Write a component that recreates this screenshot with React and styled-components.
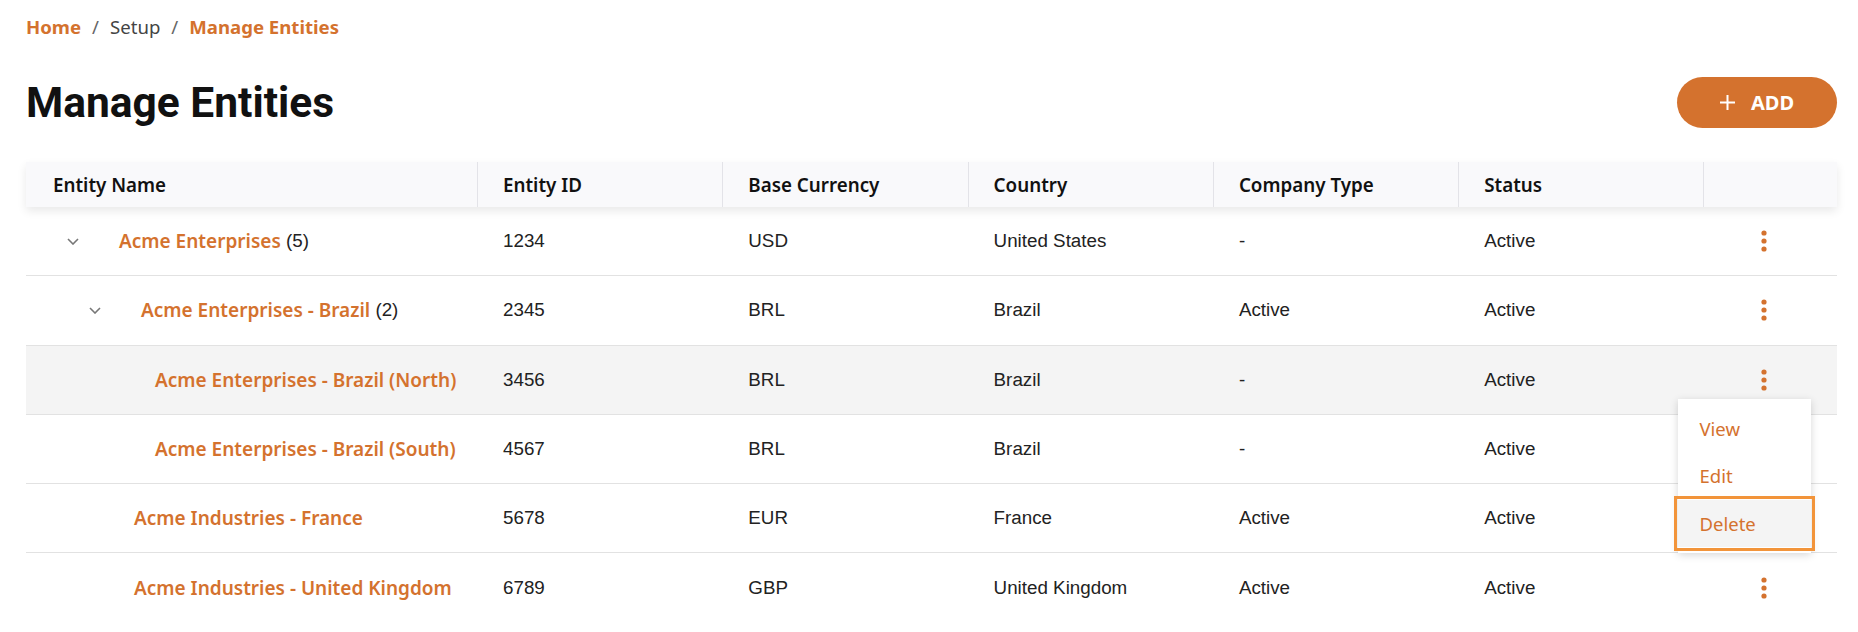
import React from 'react';
import styled, { createGlobalStyle } from 'styled-components';

const ORANGE = '#d4722e';
const COLS = '451px repeat(5, 245.3px) 1fr';

const GlobalStyle = createGlobalStyle`
    body {
        margin: 0;
        background: #fff;
        font-family: "Noto Sans", "Liberation Sans", sans-serif;
    }
`

const Page = styled.div`
    padding: 15px 21px 0 26px;
`

const Crumbs = styled.nav`
    display: flex;
    align-items: center;
    height: 24px;
    font-size: 18.6px;
    line-height: 24px;
`

const Crumb = styled.span`
    color: ${p => p.$active ? ORANGE : '#444'};
    font-weight: ${p => p.$active ? 700 : 400};
`

const Slash = styled.span`
    color: #666;
    margin: 0 11px;
`

const TitleBar = styled.div`
    display: flex;
    align-items: center;
    justify-content: space-between;
    margin-top: 38px;
    height: 51px;
`

const Title = styled.h1`
    margin: 0;
    font-family: Roboto, "Liberation Sans", sans-serif;
    font-weight: 700;
    font-size: 42.5px;
    line-height: 51px;
    color: #111;
`

const AddButton = styled.button`
    display: flex;
    align-items: center;
    justify-content: center;
    gap: 16px;
    width: 160px;
    height: 51px;
    border: none;
    border-radius: 26px;
    background: ${ORANGE};
    color: #fff;
    font-family: "Noto Sans", sans-serif;
    font-weight: 700;
    font-size: 20px;
    cursor: pointer;
`

const Table = styled.div`
    margin-top: 34px;
`

const HeaderRow = styled.div`
    display: grid;
    grid-template-columns: ${COLS};
    height: 45px;
    background: #f9f9fb;
    box-shadow: 0 4px 9px rgba(0, 0, 0, 0.09);
    position: relative;
    z-index: 1;
`

const HeadCell = styled.div`
    display: flex;
    align-items: center;
    padding: 0 25px;
    border-left: 1px solid #e3e3e8;
    font-weight: 600;
    font-size: 18.8px;
    color: #111;

    &:first-child {
        border-left: none;
        padding-left: 27px;
    }
`

const Row = styled.div`
    display: grid;
    grid-template-columns: ${COLS};
    height: 69.3px;
    box-sizing: border-box;
    border-bottom: ${p => p.$last ? 'none' : '1px solid #e2e2e2'};
    background: ${p => p.$hover ? '#f4f4f4' : '#fff'};
`

const Cell = styled.div`
    display: flex;
    align-items: center;
    padding: 0 26px;
    font-family: "Liberation Sans", Arial, sans-serif;
    font-size: 18.8px;
    color: #222;
`

const NameCell = styled.div`
    display: flex;
    align-items: center;
    padding-left: ${p => p.$indent}px;
    font-family: "Liberation Sans", Arial, sans-serif;
    font-size: 18.8px;
    color: #222;
    white-space: pre;
`

const Toggle = styled.svg`
    width: 12px;
    height: 7px;
    margin-right: 40px;
    flex: none;
`

const EntityLink = styled.span`
    font-family: "Noto Sans", sans-serif;
    font-weight: 600;
    font-size: 19px;
    color: ${ORANGE};
`

const ActionCell = styled.div`
    position: relative;
    display: flex;
    align-items: center;
    padding-left: 58px;
`

const Kebab = styled.svg`
    width: 6px;
    height: 22px;
    cursor: pointer;
`

const Menu = styled.div`
    position: absolute;
    top: calc(50% + 19px);
    left: -25px;
    width: 133px;
    padding: 6px 0;
    background: #fff;
    box-shadow: 0 2px 8px rgba(0, 0, 0, 0.16);
    z-index: 10;
`

const MenuItem = styled.div`
    display: flex;
    align-items: center;
    height: 47.5px;
    padding-left: 21px;
    font-family: "Noto Sans", sans-serif;
    font-size: 18.5px;
    color: ${ORANGE};
    background: ${p => p.$focused ? '#f4f4f4' : 'transparent'};
    outline: ${p => p.$focused ? '3px solid #f2943a' : 'none'};
    outline-offset: ${p => p.$focused ? '1px' : '0'};
`

const rows = [
    { name: 'Acme Enterprises', count: 5, id: '1234', currency: 'USD', country: 'United States', type: '-', status: 'Active', indent: 41, open: true },
    { name: 'Acme Enterprises - Brazil', count: 2, id: '2345', currency: 'BRL', country: 'Brazil', type: 'Active', status: 'Active', indent: 63, open: true },
    { name: 'Acme Enterprises - Brazil (North)', id: '3456', currency: 'BRL', country: 'Brazil', type: '-', status: 'Active', indent: 129, menu: true },
    { name: 'Acme Enterprises - Brazil (South)', id: '4567', currency: 'BRL', country: 'Brazil', type: '-', status: 'Active', indent: 129 },
    { name: 'Acme Industries - France', id: '5678', currency: 'EUR', country: 'France', type: 'Active', status: 'Active', indent: 108 },
    { name: 'Acme Industries - United Kingdom', id: '6789', currency: 'GBP', country: 'United Kingdom', type: 'Active', status: 'Active', indent: 108 },
];

const Dots = () => (
    <Kebab viewBox="0 0 6 22">
        <circle cx="3" cy="3" r="2.6" fill={ORANGE} />
        <circle cx="3" cy="11" r="2.6" fill={ORANGE} />
        <circle cx="3" cy="19" r="2.6" fill={ORANGE} />
    </Kebab>
)

const App = () => {
    return (
        <>
            <GlobalStyle />
            <Page>
                <Crumbs>
                    <Crumb $active>Home</Crumb>
                    <Slash>/</Slash>
                    <Crumb>Setup</Crumb>
                    <Slash>/</Slash>
                    <Crumb $active>Manage Entities</Crumb>
                </Crumbs>
                <TitleBar>
                    <Title>Manage Entities</Title>
                    <AddButton>
                        <svg width="15" height="15" viewBox="0 0 15 15">
                            <path d="M7.5 0v15M0 7.5h15" stroke="#fff" strokeWidth="2" />
                        </svg>
                        ADD
                    </AddButton>
                </TitleBar>
                <Table>
                    <HeaderRow>
                        <HeadCell>Entity Name</HeadCell>
                        <HeadCell>Entity ID</HeadCell>
                        <HeadCell>Base Currency</HeadCell>
                        <HeadCell>Country</HeadCell>
                        <HeadCell>Company Type</HeadCell>
                        <HeadCell>Status</HeadCell>
                        <HeadCell></HeadCell>
                    </HeaderRow>
                    {
                        rows.map((row, i) => (
                            <Row key={row.id} $hover={row.menu} $last={i === rows.length - 1}>
                                <NameCell $indent={row.indent}>
                                    {row.open && (
                                        <Toggle viewBox="0 0 12 7">
                                            <path d="M1 1l5 5 5-5" fill="none" stroke="#777" strokeWidth="1.6" />
                                        </Toggle>
                                    )}
                                    <EntityLink>{row.name}</EntityLink>
                                    {row.count && ` (${row.count})`}
                                </NameCell>
                                <Cell>{row.id}</Cell>
                                <Cell>{row.currency}</Cell>
                                <Cell>{row.country}</Cell>
                                <Cell>{row.type}</Cell>
                                <Cell>{row.status}</Cell>
                                <ActionCell>
                                    <Dots />
                                    {row.menu && (
                                        <Menu>
                                            <MenuItem>View</MenuItem>
                                            <MenuItem>Edit</MenuItem>
                                            <MenuItem $focused>Delete</MenuItem>
                                        </Menu>
                                    )}
                                </ActionCell>
                            </Row>
                        ))
                    }
                </Table>
            </Page>
        </>
    );
};

export default App;
